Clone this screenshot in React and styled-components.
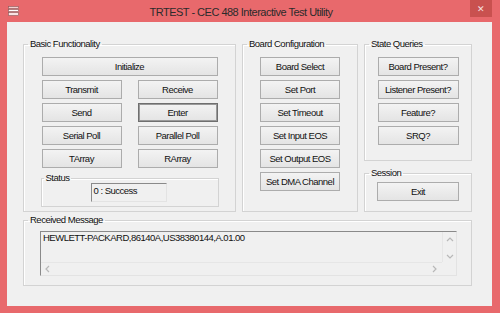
import React from "react";
import styled, { createGlobalStyle } from "styled-components";

const GlobalStyle = createGlobalStyle`
  html, body {
    margin: 0;
    padding: 0;
    background: #ffffff;
  }
`;

const UI_FONT = `"Liberation Sans", Arial, sans-serif`;

const Window = styled.div`
  width: 500px;
  height: 313px;
  background: #e8696c;
  display: flex;
  flex-direction: column;
  box-sizing: border-box;
  padding: 0 8px 7px 7px;
  font-family: ${UI_FONT};
  font-size: 9.5px;
  letter-spacing: -0.5px;
  color: #111111;
`;

const TitleBar = styled.div`
  height: 22px;
  display: flex;
  align-items: center;
  position: relative;
  margin: 0 -8px 0 -7px;
`;

const AppIcon = styled.svg`
  width: 11px;
  height: 10px;
  margin-left: 8px;
`;

const Title = styled.div`
  flex: 1;
  text-align: center;
  font-size: 11px;
  letter-spacing: -0.5px;
  color: #2b2b2b;
  margin-right: 37px;
  padding-top: 1px;
`;

const CloseButton = styled.div`
  position: absolute;
  right: 8px;
  top: 0;
  width: 22px;
  height: 17px;
  background: #c9514f;
  color: #f6e0e0;
  font-size: 9px;
  letter-spacing: 0;
  display: flex;
  align-items: center;
  justify-content: center;
`;

const Client = styled.div`
  flex: 1;
  background: #f0f0f0;
  padding: 16px 0 0 16px;
  display: flex;
  flex-direction: column;
  gap: 2px;
`;

const TopRow = styled.div`
  display: flex;
  gap: 6px;
`;

const Group = styled.fieldset`
  margin: 0;
  padding: ${(p) => p.$pad || "7px 0 0 0"};
  border: 1px solid #d3d3d3;
  box-shadow: inset 1px 1px 0 #ffffff;
  width: ${(p) => p.$w || "auto"};
  height: ${(p) => p.$h || "auto"};
  box-sizing: border-box;
  display: flex;
  flex-direction: column;
  align-items: ${(p) => p.$align || "center"};
  gap: 4px;
  min-width: 0;
`;

const Legend = styled.legend`
  padding: 0 2px;
  margin-left: ${(p) => p.$ml ?? 4}px;
  font-size: 9.5px;
  line-height: 12px;
  color: #111111;
`;

const Column = styled.div`
  display: flex;
  flex-direction: column;
  gap: 6px;
  width: 108px;
`;

const Pair = styled.div`
  display: flex;
  gap: 16px;
`;

const Button = styled.div`
  width: ${(p) => p.$w || 80}px;
  height: 19px;
  box-sizing: border-box;
  border: 1px solid ${(p) => (p.$default ? "#6f6f6f" : "#acacac")};
  box-shadow: ${(p) => (p.$default ? "inset 0 0 0 1px #9a9a9a" : "none")};
  background: linear-gradient(#f3f3f3, #e4e4e4);
  display: flex;
  align-items: center;
  justify-content: center;
  color: #111111;
  white-space: nowrap;
`;

const StatusGroup = styled(Group)`
  width: 178px;
  height: 35px;
  padding: 0;
  align-items: flex-start;
`;

const TextBox = styled.div`
  box-sizing: border-box;
  width: ${(p) => p.$w}px;
  height: ${(p) => p.$h}px;
  margin: -1px 0 0 ${(p) => p.$ml || 0}px;
  border-top: 1px solid #8a8a8a;
  border-left: 1px solid #8a8a8a;
  border-right: 1px solid #e3e3e3;
  border-bottom: 1px solid #e3e3e3;
  background: #f0f0f0;
  padding: 1px 0 0 2px;
  color: #111111;
  white-space: nowrap;
`;

const MessageBox = styled.div`
  box-sizing: border-box;
  width: 417px;
  height: 45px;
  margin-left: 16px;
  border-top: 1px solid #8a8a8a;
  border-left: 1px solid #8a8a8a;
  border-right: 1px solid #e3e3e3;
  border-bottom: 1px solid #e3e3e3;
  display: grid;
  grid-template-columns: 1fr 14px;
  grid-template-rows: 1fr 13px;
`;

const MessageText = styled.div`
  padding: 0 0 0 2px;
  white-space: nowrap;
  color: #111111;
`;

const ScrollTrack = styled.div`
  background: #f0f0f0;
  display: flex;
  flex-direction: ${(p) => (p.$vertical ? "column" : "row")};
  align-items: center;
  justify-content: space-between;
  padding: ${(p) => (p.$vertical ? "4px 0 1px 0" : "0 3px 0 3px")};
  border-left: ${(p) => (p.$vertical ? "1px solid #e6e6e6" : "none")};
  border-top: ${(p) => (p.$vertical ? "none" : "1px solid #e6e6e6")};
`;

const Corner = styled.div`
  background: #f0f0f0;
`;

const Chevron = ({ dir }) => {
  const paths = {
    up: "M1 5 L4 2 L7 5",
    down: "M1 2 L4 5 L7 2",
    left: "M5 1 L2 4 L5 7",
    right: "M2 1 L5 4 L2 7",
  };
  return (
    <svg width="8" height="8" viewBox="0 0 8 8">
      <path d={paths[dir]} fill="none" stroke="#b8b8b8" strokeWidth="1.2" />
    </svg>
  );
};

const App = () => (
  <>
    <GlobalStyle />
    <Window>
      <TitleBar>
        <AppIcon viewBox="0 0 11 10">
          <rect x="0.5" y="0.5" width="10" height="2" fill="#f4d0d0" stroke="#8a5a5a" strokeWidth="0.6" />
          <rect x="0.5" y="3.5" width="10" height="2" fill="#ffffff" stroke="#8a5a5a" strokeWidth="0.6" />
          <rect x="0.5" y="6.5" width="10" height="3" fill="#f8e4e4" stroke="#8a5a5a" strokeWidth="0.6" />
        </AppIcon>
        <Title>TRTEST - CEC 488 Interactive Test Utility</Title>
        <CloseButton>✕</CloseButton>
      </TitleBar>
      <Client>
        <TopRow>
          <Group $w="213px" $h="174px">
            <Legend>Basic Functionality</Legend>
            <Button $w={176}>Initialize</Button>
            <Pair>
              <Button>Transmit</Button>
              <Button>Receive</Button>
            </Pair>
            <Pair>
              <Button>Send</Button>
              <Button $default>Enter</Button>
            </Pair>
            <Pair>
              <Button>Serial Poll</Button>
              <Button>Parallel Poll</Button>
            </Pair>
            <Pair>
              <Button>TArray</Button>
              <Button>RArray</Button>
            </Pair>
            <StatusGroup>
              <Legend $ml={2}>Status</Legend>
              <TextBox $w={76} $h={19} $ml={49}>0 : Success</TextBox>
            </StatusGroup>
          </Group>
          <Group $w="116px" $h="174px">
            <Legend>Board Configuration</Legend>
            <Button>Board Select</Button>
            <Button>Set Port</Button>
            <Button>Set Timeout</Button>
            <Button>Set Input EOS</Button>
            <Button>Set Output EOS</Button>
            <Button>Set DMA Channel</Button>
          </Group>
          <Column>
            <Group $h="123px">
              <Legend>State Queries</Legend>
              <Button $w={81}>Board Present?</Button>
              <Button $w={81}>Listener Present?</Button>
              <Button $w={81}>Feature?</Button>
              <Button $w={81}>SRQ?</Button>
            </Group>
            <Group $h="45px" $pad="3px 0 0 0">
              <Legend>Session</Legend>
              <Button $w={82}>Exit</Button>
            </Group>
          </Column>
        </TopRow>
        <Group $w="449px" $h="72px" $pad="5px 0 0 0" $align="flex-start">
          <Legend>Received Message</Legend>
          <MessageBox>
            <MessageText>HEWLETT-PACKARD,86140A,US38380144,A.01.00</MessageText>
            <ScrollTrack $vertical>
              <Chevron dir="up" />
              <Chevron dir="down" />
            </ScrollTrack>
            <ScrollTrack>
              <Chevron dir="left" />
              <Chevron dir="right" />
            </ScrollTrack>
            <Corner />
          </MessageBox>
        </Group>
      </Client>
    </Window>
  </>
);

export default App;
